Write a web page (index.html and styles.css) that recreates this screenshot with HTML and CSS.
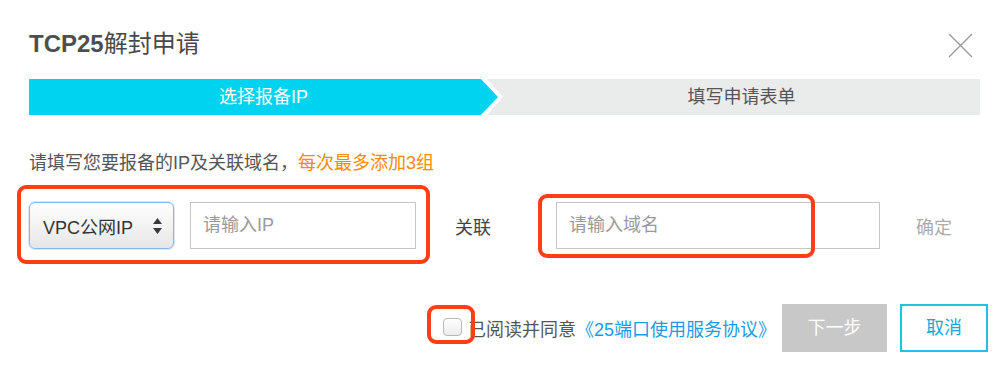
FILE: index.html
```html
<!DOCTYPE html>
<html lang="zh-CN">
<head>
<meta charset="utf-8">
<title>TCP25解封申请</title>
<link rel="stylesheet" href="styles.css">
</head>
<body>
<div class="dialog">
  <div class="header">
    <h1 class="title"><span class="title-code">TCP25</span>解封申请</h1>
    <svg class="close" width="25" height="25" viewBox="0 0 25 25" aria-label="关闭">
      <path d="M1 1 L24 24 M24 1 L1 24" stroke="#9a9a9a" stroke-width="1.3" fill="none"/>
    </svg>
  </div>

  <div class="steps">
    <div class="step step-active">选择报备IP</div>
    <div class="step step-next">填写申请表单</div>
  </div>

  <p class="hint">请填写您要报备的IP及关联域名，<span class="hint-warn">每次最多添加3组</span></p>

  <div class="row">
    <div class="select">
      <span class="select-text">VPC公网IP</span>
      <svg class="select-arrows" width="9" height="16" viewBox="0 0 9 16">
        <path d="M4.5 0 L9 6 L0 6 Z M0 10 L9 10 L4.5 16 Z" fill="#3a3a3a"/>
      </svg>
    </div>
    <div class="input input-ip">请输入IP</div>
    <span class="link-label">关联</span>
    <div class="input input-domain">请输入域名</div>
    <span class="confirm">确定</span>
    <span class="mark mark-ip"></span>
    <span class="mark mark-domain"></span>
  </div>

  <div class="footer">
    <span class="check-wrap">
      <span class="checkbox"></span>
      <span class="mark mark-check"></span>
    </span>
    <span class="agree">已阅读并同意<a class="agree-link">《25端口使用服务协议》</a></span>
    <span class="btn btn-next">下一步</span>
    <span class="btn btn-cancel">取消</span>
  </div>
</div>
</body>
</html>
```

FILE: styles.css
```css
* { box-sizing: border-box; }

html, body {
  margin: 0;
  padding: 0;
  background: #ffffff;
}

body {
  font-family: "Liberation Sans", "Noto Sans CJK SC", sans-serif;
  color: #555555;
  width: 1000px;
  height: 367px;
  overflow: hidden;
}

.dialog {
  padding-left: 29px;
}

.header {
  display: flex;
  align-items: center;
  justify-content: space-between;
  padding-top: 29px;
  padding-right: 27px;
}

.title {
  margin: 0;
  font-size: 24px;
  line-height: 28px;
  font-weight: 400;
  color: #484848;
}

.title-code {
  font-weight: 700;
  color: #4e4e4e;
}

.close {
  display: block;
  margin-top: 4px;
}

.steps {
  display: flex;
  margin-top: 21px;
  margin-right: 20px;
  height: 36px;
}

.step {
  height: 36px;
  line-height: 36px;
  font-size: 18px;
  text-align: center;
}

.step-active {
  width: 469px;
  background: #00d3f0;
  color: #ffffff;
  clip-path: polygon(0 0, calc(100% - 17px) 0, 100% 50%, calc(100% - 17px) 100%, 0 100%);
  position: relative;
  z-index: 1;
}

.step-next {
  flex: 1;
  margin-left: -11px;
  padding-left: 16px;
  background: #eaebeb;
  color: #555555;
  clip-path: polygon(0 0, 100% 0, 100% 100%, 0 100%, 16px 50%);
}

.hint {
  margin: 36px 0 0;
  font-size: 18px;
  line-height: 24px;
  color: #555555;
}

.hint-warn {
  color: #ff8a00;
}

.row {
  position: relative;
  display: flex;
  align-items: center;
  margin-top: 27px;
  height: 47px;
}

.select {
  width: 145px;
  height: 47px;
  display: flex;
  align-items: center;
  justify-content: space-between;
  padding: 0 11px 0 13px;
  border: 1px solid #86b7ea;
  border-radius: 6px;
  background: linear-gradient(#ffffff, #e6e6e6);
  box-shadow: inset 0 1px 0 #ffffff, 0 0 0 1px #d6e7f8;
  color: #333333;
  font-size: 18px;
}

.select-arrows {
  display: block;
}

.input {
  height: 47px;
  line-height: 45px;
  padding-left: 12px;
  border: 1px solid #c6c6c6;
  background: #ffffff;
  font-size: 18px;
  color: #9a9a9a;
}

.input-ip {
  width: 226px;
  margin-left: 16px;
}

.link-label {
  margin-left: 39px;
  font-size: 18px;
  color: #444444;
}

.input-domain {
  width: 324px;
  margin-left: 65px;
}

.confirm {
  margin-left: 36px;
  font-size: 18px;
  color: #ababab;
}

.mark {
  position: absolute;
  border: 4px solid #ff3d17;
  border-radius: 9px;
  pointer-events: none;
}

.mark-ip {
  left: -12px;
  top: -17px;
  width: 413px;
  height: 79px;
}

.mark-domain {
  left: 509px;
  top: -8px;
  width: 277px;
  height: 64px;
}

.footer {
  display: flex;
  align-items: center;
  justify-content: flex-end;
  margin-top: 55px;
  padding-right: 12px;
  height: 48px;
}

.check-wrap {
  position: relative;
  display: block;
  width: 19px;
  height: 18px;
  margin-top: -2px;
}

.checkbox {
  display: block;
  width: 19px;
  height: 18px;
  border: 1px solid #b8b8b8;
  border-radius: 4px;
  background: linear-gradient(#ffffff, #ececec);
}

.mark-check {
  left: -16px;
  top: -13px;
  width: 48px;
  height: 39px;
}

.agree {
  margin-left: 6px;
  font-size: 18px;
  color: #555555;
  white-space: nowrap;
}

.agree-link {
  color: #1a9be8;
  text-decoration: none;
}

.btn {
  display: block;
  height: 48px;
  line-height: 48px;
  text-align: center;
  font-size: 18px;
}

.btn-next {
  width: 105px;
  margin-left: 6px;
  background: #c8c8c8;
  color: #ffffff;
}

.btn-cancel {
  width: 88px;
  margin-left: 13px;
  border: 2px solid #22c3e2;
  line-height: 44px;
  color: #15a8db;
  background: #ffffff;
}
```
